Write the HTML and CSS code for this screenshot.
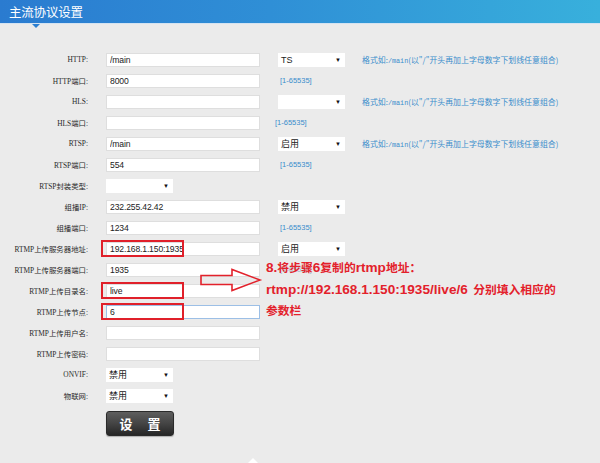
FILE: index.html
```html
<!DOCTYPE html>
<html lang="zh">
<head>
<meta charset="utf-8">
<title>主流协议设置</title>
<link rel="stylesheet" href="styles.css">
</head>
<body>
<div class="page">
  <header class="bar"><h1 class="title">主流协议设置</h1></header>
  <main class="form">
    <div class="row">
      <span class="lbl">HTTP:</span>
      <input class="txt" value="/main">
      <div class="sel"><span>TS</span><i>▼</i></div>
      <span class="hint">格式如:<span class="mono">/main</span>(以"/"开头再加上字母数字下划线任意组合)</span>
    </div>
    <div class="row">
      <span class="lbl">HTTP端口:</span>
      <input class="txt" value="8000">
      <span class="port">[1-65535]</span>
    </div>
    <div class="row">
      <span class="lbl">HLS:</span>
      <input class="txt" value="">
      <div class="sel"><span></span><i>▼</i></div>
      <span class="hint">格式如:<span class="mono">/main</span>(以"/"开头再加上字母数字下划线任意组合)</span>
    </div>
    <div class="row">
      <span class="lbl">HLS端口:</span>
      <input class="txt" value="">
      <span class="port port-left">[1-65535]</span>
    </div>
    <div class="row">
      <span class="lbl">RTSP:</span>
      <input class="txt" value="/main">
      <div class="sel"><span>启用</span><i>▼</i></div>
      <span class="hint">格式如:<span class="mono">/main</span>(以"/"开头再加上字母数字下划线任意组合)</span>
    </div>
    <div class="row">
      <span class="lbl">RTSP端口:</span>
      <input class="txt" value="554">
      <span class="port">[1-65535]</span>
    </div>
    <div class="row">
      <span class="lbl">RTSP封装类型:</span>
      <div class="sel"><span></span><i>▼</i></div>
    </div>
    <div class="row">
      <span class="lbl">组播IP:</span>
      <input class="txt" value="232.255.42.42">
      <div class="sel"><span>禁用</span><i>▼</i></div>
    </div>
    <div class="row">
      <span class="lbl">组播端口:</span>
      <input class="txt" value="1234">
      <span class="port">[1-65535]</span>
    </div>
    <div class="row">
      <span class="lbl">RTMP上传服务器地址:</span>
      <span class="field"><input class="txt" value="192.168.1.150:1935"><span class="mark"></span></span>
      <div class="sel"><span>启用</span><i>▼</i></div>
    </div>
    <div class="row">
      <span class="lbl">RTMP上传服务器端口:</span>
      <input class="txt" value="1935">
      <span class="port port-hidden">[1-65535]</span>
    </div>
    <div class="row">
      <span class="lbl">RTMP上传目录名:</span>
      <span class="field"><input class="txt" value="live"><span class="mark"></span></span>
    </div>
    <div class="row">
      <span class="lbl">RTMP上传节点:</span>
      <span class="field"><input class="txt focus" value="6"><span class="mark"></span></span>
    </div>
    <div class="row">
      <span class="lbl">RTMP上传用户名:</span>
      <input class="txt" value="">
    </div>
    <div class="row">
      <span class="lbl">RTMP上传密码:</span>
      <input class="txt" value="">
    </div>
    <div class="row">
      <span class="lbl">ONVIF:</span>
      <div class="sel"><span>禁用</span><i>▼</i></div>
    </div>
    <div class="row">
      <span class="lbl">物联网:</span>
      <div class="sel"><span>禁用</span><i>▼</i></div>
    </div>
    <div class="row row-btn">
      <span></span>
      <button class="btn">设 置</button>
    </div>
  </main>

  <svg class="arrow" width="66" height="28" viewBox="0 0 66 28">
    <path d="M3 8.5 H34 V2.5 L62 13 L34 23.5 V17.5 H3 Z" fill="none" stroke="#e3212b" stroke-width="1.6" stroke-linejoin="miter"/>
  </svg>
  <div class="note">
    <p><span class="lat">8.</span>将步骤<span class="lat">6</span>复制的<span class="lat">rtmp</span>地址：</p>
    <p><span class="lat">rtmp://192.168.1.150:1935/live/6</span>&nbsp;&nbsp;分别填入相应的</p>
    <p>参数栏</p>
  </div>
  <span class="notch"></span>
</div>
</body>
</html>
```

FILE: styles.css
```css
html, body {
  margin: 0;
  padding: 0;
}
body {
  background: #ebebeb;
  width: 600px;
  height: 463px;
  overflow: hidden;
  font-family: "Liberation Sans", "Noto Sans CJK SC", sans-serif;
}
.page {
  position: relative;
  width: 600px;
  height: 463px;
}
.bar {
  position: relative;
  height: 23px;
  background: linear-gradient(to right, #2a7bd0 0%, #2f8fd6 45%, #38b0dc 100%);
  border-bottom: 1px solid #d4e3f1;
}
.bar::after {
  content: "";
  position: absolute;
  left: 32px;
  bottom: -5px;
  border-left: 4px solid transparent;
  border-right: 4px solid transparent;
  border-top: 4px solid #2b7fd1;
}
.title {
  margin: 0;
  padding-left: 9px;
  line-height: 24px;
  font-size: 12.5px;
  font-weight: normal;
  color: #ffffff;
  font-family: "Noto Sans CJK SC", sans-serif;
  letter-spacing: -0.2px;
}
.form {
  padding-top: 25px;
}
.row {
  display: grid;
  grid-template-columns: 88px 154px 67px 1fr;
  column-gap: 18px;
  align-items: center;
  height: 21px;
}
.lbl {
  text-align: right;
  font-family: "Liberation Serif", "Noto Sans CJK SC", serif;
  font-size: 7.4px;
  color: #2a2a2a;
  white-space: nowrap;
}
.txt {
  box-sizing: border-box;
  width: 154px;
  height: 14px;
  margin: 0;
  padding: 0 3px;
  border: 1px solid #dedede;
  background: #ffffff;
  font-family: "Liberation Sans", sans-serif;
  font-size: 8.6px;
  letter-spacing: -0.15px;
  color: #222222;
  outline: none;
}
.txt.focus {
  border-color: #9cbfe6;
}
.field {
  position: relative;
  display: block;
  width: 154px;
  height: 14px;
}
.field .txt {
  display: block;
}
.mark {
  position: absolute;
  left: -5px;
  top: -2px;
  width: 79px;
  height: 13px;
  border: 2px solid #e0202a;
}
.sel {
  box-sizing: border-box;
  width: 67px;
  height: 14px;
  background: #ffffff;
  display: flex;
  align-items: center;
  justify-content: space-between;
  padding: 0 4px 0 3px;
  font-family: "Liberation Sans", "Noto Sans CJK SC", sans-serif;
  font-size: 9px;
  color: #222222;
}
.sel i {
  font-style: normal;
  font-size: 6px;
  color: #111111;
}
.hint {
  margin-left: -1px;
  font-family: "Noto Sans CJK SC", sans-serif;
  font-size: 7.9px;
  color: #3a8dcc;
  white-space: nowrap;
}
.mono {
  font-family: "Liberation Mono", monospace;
  font-size: 6.8px;
}
.port {
  font-family: "Liberation Sans", sans-serif;
  font-size: 7.5px;
  color: #3a8dcc;
  padding-left: 2px;
  white-space: nowrap;
}
.port-left {
  margin-left: -5px;
}
.port-hidden {
  color: #9fb8cf;
}
.row-btn {
  height: auto;
  margin-top: 5px;
}
.btn {
  width: 68px;
  height: 25px;
  border: 1px solid #2a2a2a;
  border-radius: 3px;
  background: linear-gradient(to bottom, #5e5e5e 0%, #444444 50%, #262626 100%);
  box-shadow: 0 1px 1px rgba(0, 0, 0, 0.25);
  color: #ffffff;
  font-family: "Noto Sans CJK SC", sans-serif;
  font-weight: bold;
  font-size: 13px;
  letter-spacing: 6px;
  padding: 0 0 0 6px;
}
.arrow {
  position: absolute;
  left: 198px;
  top: 267px;
}
.note {
  position: absolute;
  left: 266px;
  top: 256px;
  color: #e3212b;
  font-family: "Noto Sans CJK SC", sans-serif;
  font-weight: bold;
  font-size: 11.8px;
}
.note p {
  margin: 0;
  height: 21.5px;
  line-height: 21.5px;
  white-space: nowrap;
}
.lat {
  font-family: "Liberation Sans", sans-serif;
  font-size: 13.6px;
}
.notch {
  position: absolute;
  left: 248px;
  top: 458px;
  border-left: 5px solid transparent;
  border-right: 5px solid transparent;
  border-bottom: 5px solid #ffffff;
}
```
